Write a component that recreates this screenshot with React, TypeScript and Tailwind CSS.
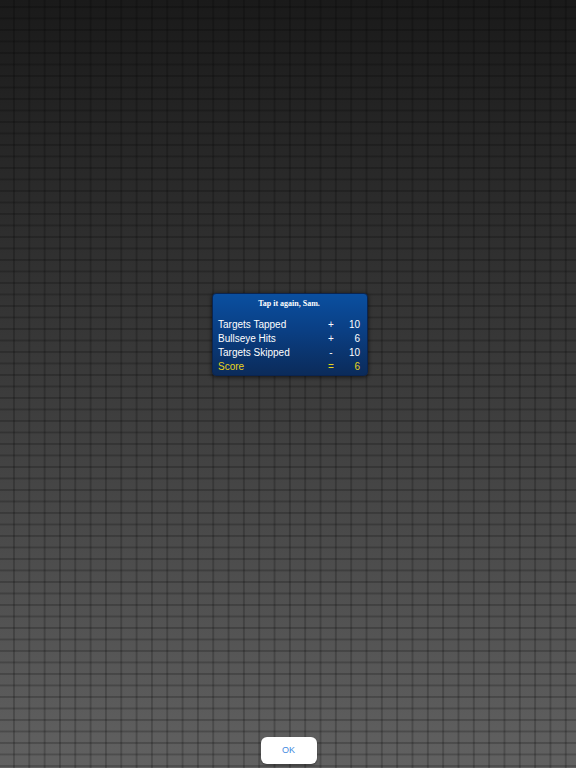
import React from "react";

const rows = [
  { label: "Targets Tapped", op: "+", val: "10" },
  { label: "Bullseye Hits", op: "+", val: "6" },
  { label: "Targets Skipped", op: "-", val: "10" },
];

export default function App() {
  return (
    <div className="w-[576px] h-[768px] flex flex-col items-center overflow-hidden [background-image:linear-gradient(to_right,rgba(0,0,0,0.2)_2px,transparent_2px),linear-gradient(to_bottom,rgba(0,0,0,0.2)_2px,transparent_2px),linear-gradient(to_bottom,#1a1a1a,#3b3b3b_50%,#616161)] [background-size:15.33px_11.5px,15.33px_11.5px,100%_100%] [background-position:13px_0,0_6px,0_0]">
      <div className="pt-[293px] pl-[4px]">
        <div className="w-[156px] h-[83px] rounded-[4px] border border-[#0a2450] bg-[linear-gradient(to_bottom,#0a4fa0,#0a3f84_45%,#0b2b5a)] shadow-[0_1px_4px_rgba(0,0,0,0.7)] flex flex-col pl-[5px] pr-[7px] pt-[4px]">
          <div className="h-[12px] leading-[12px] text-center text-white font-bold text-[8px] [font-family:'Liberation_Serif',serif]">
            Tap it again, Sam.
          </div>
          <div className="mt-[8px] flex flex-col [font-family:'Liberation_Sans',Arial,sans-serif] text-[10px] leading-[14px]">
            {rows.map((r) => (
              <div key={r.label} className="flex text-white">
                <span className="flex-1">{r.label}</span>
                <span className="w-[12px] text-center">{r.op}</span>
                <span className="w-[23px] text-right">{r.val}</span>
              </div>
            ))}
            <div className="flex text-[#e8d41c]">
              <span className="flex-1">Score</span>
              <span className="w-[12px] text-center">=</span>
              <span className="w-[23px] text-right">6</span>
            </div>
          </div>
        </div>
      </div>
      <div className="mt-auto mb-[4px] pl-[1px]">
        <div className="w-[56px] h-[27px] rounded-[6px] bg-white shadow-[0_1px_2px_rgba(0,0,0,0.4)] flex items-center justify-center text-[#3f8ae0] text-[9px] [font-family:'Liberation_Sans',Arial,sans-serif]">
          OK
        </div>
      </div>
    </div>
  );
}
